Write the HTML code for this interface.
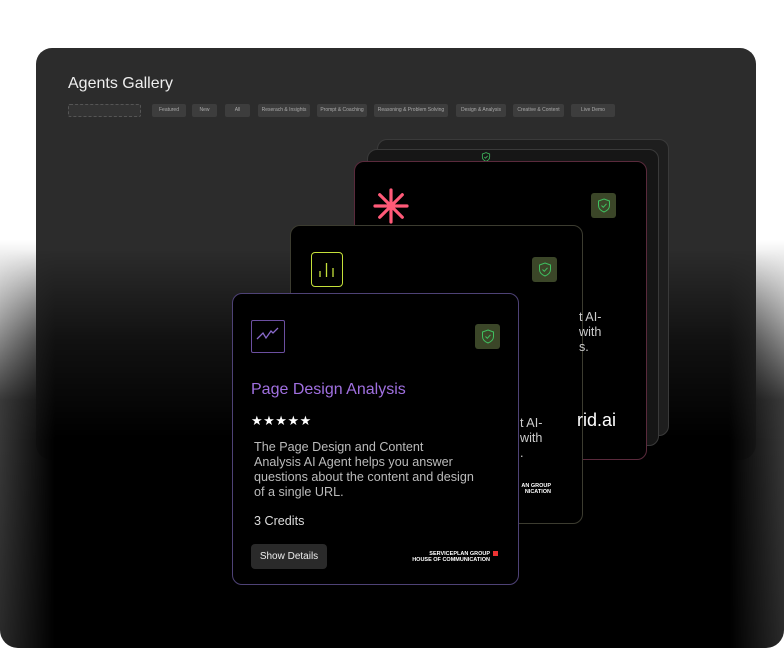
<!DOCTYPE html>
<html><head><meta charset="utf-8"><style>
*{box-sizing:border-box;margin:0;padding:0}
body{width:784px;height:648px;position:relative;overflow:hidden;background:#fff;font-family:"Liberation Sans",sans-serif}
.bg{position:absolute;left:0;top:0;width:784px;height:648px;border-radius:0 0 18px 18px;background:linear-gradient(#fff 0,#fff 240px,#a0a0a0 320px,#3a3a3a 400px,#2a2a2a 648px)}
.panel{position:absolute;left:36px;top:48px;width:720px;height:412px;border-radius:16px;background:#2c2c2c}
.ov{position:absolute;left:0;top:0;width:784px;height:648px;border-radius:0 0 18px 18px;
background:linear-gradient(90deg,rgba(0,0,0,0) 0,#000 55px,#000 729px,rgba(0,0,0,0) 784px);
-webkit-mask-image:linear-gradient(transparent 0,transparent 250px,rgba(0,0,0,.6) 340px,#000 440px);}
.title{position:absolute;left:68px;top:75px;color:#eee;font-size:16px}
.chip{position:absolute;top:104px;height:13px;background:#3d3d3d;border-radius:2px;color:#aaa;font-size:5px;line-height:13px;text-align:center}
.card{position:absolute;border-radius:10px;background:#000;border:1px solid #444}
.sh{position:absolute;width:25px;height:25px;border-radius:3px;background:#3b4628;display:flex;align-items:center;justify-content:center}
.txt{position:absolute;color:#bbb;font-size:12.6px;line-height:15px;white-space:nowrap}
.logo{position:absolute;color:#fff;font-size:5.5px;font-weight:bold;line-height:5.5px;text-align:right;white-space:nowrap}
</style></head><body>
<div class="bg"></div>
<div class="panel"></div>
<div class="title">Agents Gallery</div>
<div class="chip" style="left:68px;width:73px;border:1px dashed #555;background:#333"></div>
<div class="chip" style="left:152px;width:34px">Featured</div>
<div class="chip" style="left:192px;width:25px">New</div>
<div class="chip" style="left:225px;width:25px">All</div>
<div class="chip" style="left:258px;width:52px">Reserach &amp; Insights</div>
<div class="chip" style="left:317px;width:50px">Prompt &amp; Coaching</div>
<div class="chip" style="left:374px;width:74px">Reasoning &amp; Problem Solving</div>
<div class="chip" style="left:456px;width:50px">Design &amp; Analysis</div>
<div class="chip" style="left:513px;width:51px">Creative &amp; Content</div>
<div class="chip" style="left:571px;width:44px">Live Demo</div>
<div class="ov"></div>

<div class="card" style="left:377px;top:139px;width:292px;height:297px;background:#1e1e1e;border-color:#3a3a3a"></div>
<div class="card" style="left:367px;top:149px;width:292px;height:297px;background:#161616;border-color:#3a3a3a">
<svg style="position:absolute;left:113px;top:2px" width="10" height="10" viewBox="0 0 14 15" fill="none" stroke="#3fc060" stroke-width="1.2"><path d="M7 1L12.5 3V7.5C12.5 10.5 10 12.8 7 14C4 12.8 1.5 10.5 1.5 7.5V3Z M4.5 7.5L6.3 9.3L9.5 5.8"/></svg></div>

<div class="card" style="left:354px;top:161px;width:293px;height:299px;border-color:#5a2a3c">
<svg style="position:absolute;left:18px;top:26px" width="36" height="36" viewBox="0 0 36 36" stroke="#ff5a78" stroke-width="3.2" stroke-linecap="round"><path d="M18 2V34M2 18H34M6.7 6.7L29.3 29.3M29.3 6.7L6.7 29.3"/></svg>
<div class="sh" style="left:236px;top:31px"><svg width="14" height="15" viewBox="0 0 14 15" fill="none" stroke="#3fc060" stroke-width="1"><path d="M7 1L12.5 3V7.5C12.5 10.5 10 12.8 7 14C4 12.8 1.5 10.5 1.5 7.5V3Z M4.5 7.5L6.3 9.3L9.5 5.8"/></svg></div>
</div>

<div class="card" style="left:290px;top:225px;width:293px;height:299px;border-color:#3c3c30">
<div style="position:absolute;left:20px;top:26px;width:32px;height:35px;border:1.5px solid #c5e03a;border-radius:4px">
<svg width="29" height="32" viewBox="0 0 29 32" stroke="#c5e03a" stroke-width="1.3"><path d="M8 24V18M14.5 24V10M21 24V15"/></svg></div>
<div class="sh" style="left:241px;top:31px"><svg width="14" height="15" viewBox="0 0 14 15" fill="none" stroke="#3fc060" stroke-width="1"><path d="M7 1L12.5 3V7.5C12.5 10.5 10 12.8 7 14C4 12.8 1.5 10.5 1.5 7.5V3Z M4.5 7.5L6.3 9.3L9.5 5.8"/></svg></div>
<div class="logo" style="left:200px;top:258px;width:60px">AN GROUP<br>NICATION</div>
</div>

<div class="txt" style="left:579px;top:310px;color:#ccc">t AI-<br>with<br>s.</div>
<div style="position:absolute;left:577px;top:410px;color:#fff;font-size:18px">rid.ai</div>
<div class="txt" style="left:520px;top:416px;color:#ccc">t AI-<br>with<br>.</div>

<div class="card" style="left:232px;top:293px;width:287px;height:292px;border-color:#4e4276">
<div style="position:absolute;left:18px;top:26px;width:34px;height:33px;border:1.5px solid #6b4fa0;border-radius:2px">
<svg width="31" height="30" viewBox="0 0 31 30" fill="none" stroke="#8a6acc" stroke-width="1.3"><path d="M5 18L11 12L14 17L19 10L21 12L26 7"/></svg></div>
<div class="sh" style="left:242px;top:30px"><svg width="14" height="15" viewBox="0 0 14 15" fill="none" stroke="#3fc060" stroke-width="1"><path d="M7 1L12.5 3V7.5C12.5 10.5 10 12.8 7 14C4 12.8 1.5 10.5 1.5 7.5V3Z M4.5 7.5L6.3 9.3L9.5 5.8"/></svg></div>
<div style="position:absolute;left:18px;top:87px;color:#a070e0;font-size:16px">Page Design Analysis</div>
<div style="position:absolute;left:18px;top:119px;color:#fff;font-size:13px;letter-spacing:0.5px">★★★★★</div>
<div class="txt" style="left:21px;top:146px">The Page Design and Content<br>Analysis AI Agent helps you answer<br>questions about the content and design<br>of a single URL.</div>
<div class="txt" style="left:21px;top:220px;color:#ddd">3 Credits</div>
<div style="position:absolute;left:18px;top:250px;width:76px;height:25px;background:#2a2a2a;border-radius:4px;color:#eee;font-size:10px;line-height:25px;text-align:center">Show Details</div>
<div class="logo" style="left:170px;top:258px;width:87px">SERVICEPLAN GROUP<br>HOUSE OF COMMUNICATION</div>
<div style="position:absolute;left:260px;top:257px;width:5px;height:5px;background:#e33"></div>
</div>
</body></html>
